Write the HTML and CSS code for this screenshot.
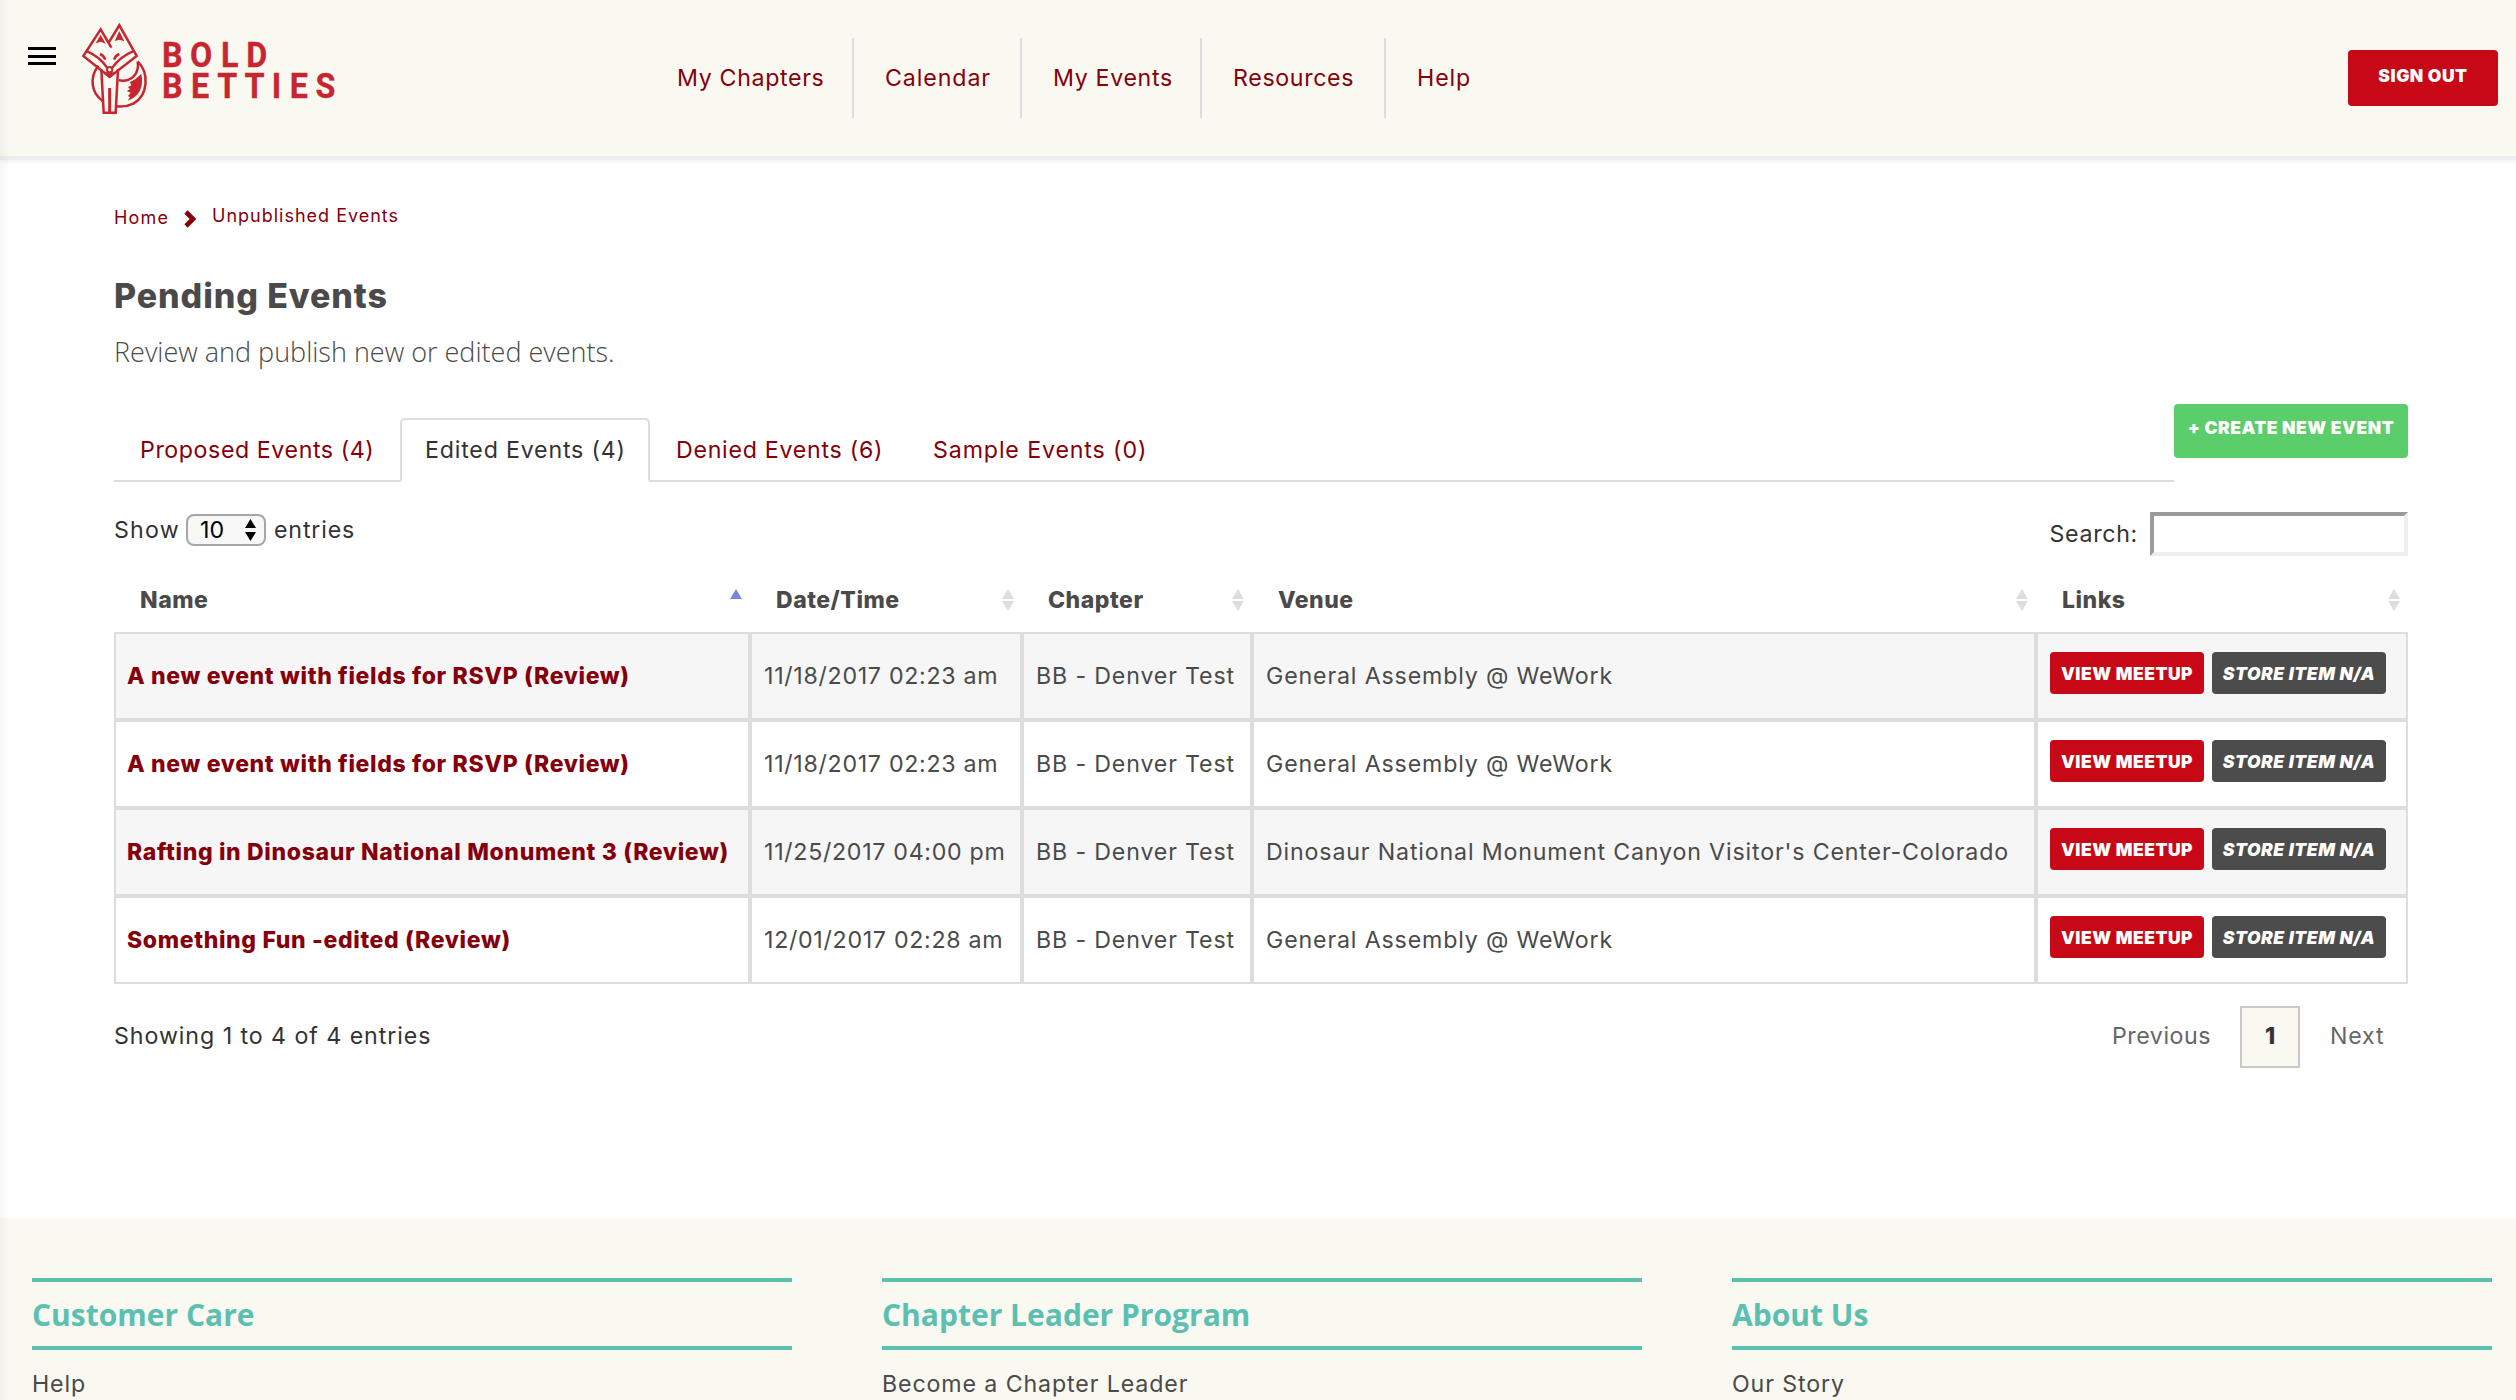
FILE: index.html
```html
<!DOCTYPE html>
<html lang="en">
<head>
<meta charset="utf-8">
<title>Pending Events - Bold Betties</title>
<link rel="stylesheet" href="styles.css">
</head>
<body>
<svg class="defs" width="0" height="0" aria-hidden="true">
  <symbol id="sort" viewBox="0 0 12 22"><path d="M6 0l6 10H0zM0 12h12L6 22z"/></symbol>
  <symbol id="sort-asc" viewBox="0 0 12 22"><path d="M6 0l6 10H0z"/></symbol>
</svg>

<header class="header">
  <div class="brand">
    <button class="menu" aria-label="Menu"><span></span><span></span><span></span></button>
    <svg class="logo" viewBox="0 0 264 94" role="img" aria-label="Bold Betties">
      <g transform="scale(.33333) translate(-240 -66)" fill="none" stroke="#c72630" stroke-width="7.5">
        <path d="M326 128L358 76L410 168L329 231L250 168L302 88L334 143"/>
        <path d="M261 154Q300 170 321 203M399 154Q360 170 337 203" stroke-width="7"/>
        <circle cx="329" cy="209" r="8" stroke-width="6"/>
        <path d="M317 218L329 233L342 218L329 220Z" fill="#c72630" stroke-width="3"/>
        <path d="M300 162Q311 166 316 179M358 162Q347 166 342 179"/>
        <path d="M302 104L287 130L302 125L317 131ZM358 93L344 123L358 119L373 124Z" fill="#c72630" stroke="none"/>
        <path d="M304 208L311 338H347L354 208"/>
        <path d="M329 264V336" stroke-width="9"/>
        <path d="M295 197C268 232 273 279 308 303"/>
        <path d="M413 184C448 218 445 286 400 311Q378 322 350 319M413 184C419 222 394 247 356 241"/>
        <path d="M424 221Q409 238 390 246L394 256L384 261L390 268L380 273L392 278L384 288L390 292L383 302Q436 282 424 221Z" fill="#c72630" stroke="none"/>
      </g>
      <g class="wordmark" transform="scale(.94 1)">
        <text x="87.2 117 150 177" y="45">BOLD</text>
        <text x="87.2 118 146 174.9 204 223.2 250.6" y="76">BETTIES</text>
      </g>
    </svg>
  </div>
  <nav class="nav">
    <a>My Chapters</a><a class="wide">Calendar</a><a>My Events</a><a>Resources</a><a class="wide">Help</a>
  </nav>
  <a class="btn btn-signout">SIGN OUT</a>
</header>

<main class="page">
  <div class="crumbs">
    <a class="crumb-home">Home</a>
    <svg class="chevron" width="12" height="18" viewBox="0 0 12 18"><path d="M2 2L9 9L2 16"/></svg>
    <a class="crumb-current">Unpublished Events</a>
  </div>
  <h1>Pending Events</h1>
  <p class="intro">Review and publish new or edited events.</p>

  <div class="tabrow">
    <nav class="tabs">
      <a class="tab">Proposed Events (4)</a><a class="tab active">Edited Events (4)</a><a class="tab denied">Denied Events (6)</a><a class="tab sample">Sample Events (0)</a>
    </nav>
    <a class="btn btn-create">+ CREATE NEW EVENT</a>
  </div>

  <div class="controls">
    <div class="length"><span class="show">Show</span>
      <span class="select">10<svg width="11" height="22" viewBox="0 0 11 22"><path d="M5.5 0l5.5 9H0zM0 13h11l-5.5 9z"/></svg></span>
      <span>entries</span></div>
    <label class="search"><span>Search:</span><input type="text"></label>
  </div>

  <table class="events">
    <colgroup><col class="c-name"><col class="c-date"><col class="c-chapter"><col class="c-venue"><col class="c-links"></colgroup>
    <thead><tr>
      <th><div><span>Name</span><svg class="sort asc"><use href="#sort-asc"/></svg></div></th>
      <th><div><span>Date/Time</span><svg class="sort"><use href="#sort"/></svg></div></th>
      <th><div><span>Chapter</span><svg class="sort"><use href="#sort"/></svg></div></th>
      <th><div><span>Venue</span><svg class="sort"><use href="#sort"/></svg></div></th>
      <th><div><span>Links</span><svg class="sort"><use href="#sort"/></svg></div></th>
    </tr></thead>
    <tbody>
      <tr><td><a>A new event with fields for RSVP (Review)</a></td><td>11/18/2017 02:23 am</td><td>BB - Denver Test</td><td>General Assembly @ WeWork</td><td><div class="links"><a class="btn btn-view">VIEW MEETUP</a><a class="btn btn-store">STORE ITEM N/A</a></div></td></tr>
      <tr><td><a>A new event with fields for RSVP (Review)</a></td><td>11/18/2017 02:23 am</td><td>BB - Denver Test</td><td>General Assembly @ WeWork</td><td><div class="links"><a class="btn btn-view">VIEW MEETUP</a><a class="btn btn-store">STORE ITEM N/A</a></div></td></tr>
      <tr><td><a>Rafting in Dinosaur National Monument 3 (Review)</a></td><td>11/25/2017 04:00 pm</td><td>BB - Denver Test</td><td>Dinosaur National Monument Canyon Visitor's Center-Colorado</td><td><div class="links"><a class="btn btn-view">VIEW MEETUP</a><a class="btn btn-store">STORE ITEM N/A</a></div></td></tr>
      <tr><td><a>Something Fun -edited (Review)</a></td><td>12/01/2017 02:28 am</td><td>BB - Denver Test</td><td>General Assembly @ WeWork</td><td><div class="links"><a class="btn btn-view">VIEW MEETUP</a><a class="btn btn-store">STORE ITEM N/A</a></div></td></tr>
    </tbody>
  </table>

  <div class="tablefoot">
    <span class="info">Showing 1 to 4 of 4 entries</span>
    <div class="pager"><a class="prev">Previous</a><a class="current">1</a><a class="next">Next</a></div>
  </div>
</main>

<footer class="footer">
  <section><h2>Customer Care</h2><a>Help</a></section>
  <section><h2>Chapter Leader Program</h2><a>Become a Chapter Leader</a></section>
  <section><h2>About Us</h2><a>Our Story</a></section>
</footer>
</body>
</html>
```
FILE: styles.css
```css
* { box-sizing: border-box; }

body {
  margin: 0;
  height: 1400px;
  overflow: hidden;
  display: flex;
  flex-direction: column;
  background: #fff;
  color: #333;
  font-family: Inter, "Liberation Sans", sans-serif;
  font-size: 23.2px;
  letter-spacing: .84px;
  white-space: nowrap;
}

/* faint shade along the left edge, cast by the closed drawer */
body::before {
  content: "";
  position: absolute;
  z-index: 2;
  left: 0;
  top: 0;
  width: 10px;
  height: 100%;
  background: linear-gradient(90deg, rgba(0, 0, 0, .035), transparent);
}

.defs { position: absolute; }

/* header */
.header {
  flex: none;
  display: flex;
  align-items: flex-start;
  height: 160px;
  padding-right: 18px;
  background: #f9f8f1;
  border-bottom: 4px solid #ededed;
  box-shadow: 0 1px 4px rgba(0, 0, 0, .07);
}
.brand { display: flex; width: 647px; padding-left: 28px; }
.menu {
  display: flex;
  flex-direction: column;
  gap: 4.5px;
  width: 28px;
  margin: 47px 24px 0 0;
  padding: 0;
  border: 0;
  background: none;
}
.menu span { height: 3px; background: #000; }
.logo { width: 264px; height: 94px; margin-top: 22px; }
.wordmark {
  fill: #c72630;
  stroke: #c72630;
  stroke-width: .3px;
  font: 700 34.4px Roboto, sans-serif;
  letter-spacing: 0;
}
.nav {
  display: grid;
  grid-template-columns: 207px 168px 180px 184px 120px;
  margin-top: 38px;
  line-height: 80px;
  color: #84000b;
  letter-spacing: .65px;
}
.nav a { padding-left: 31px; border-right: 2px solid #ddd; }
.nav a:first-child { padding-left: 30px; }
.nav a:last-child { border: 0; }
.nav .wide { letter-spacing: .9px; }

.btn {
  border-radius: 4px;
  color: #fff;
  font-size: 17.5px;
  font-weight: 900;
  letter-spacing: .52px;
  text-align: center;
}
.btn-signout {
  width: 150px;
  height: 56px;
  margin: 50px 0 0 auto;
  background: #c70817;
  line-height: 51px;
}

/* page */
.page { flex: 1; padding: 40px 108px 0 114px; }
.crumbs {
  display: flex;
  align-items: center;
  height: 34px;
  color: #84000b;
  font-size: 18px;
  letter-spacing: 1px;
}
.crumb-home { width: 70px; letter-spacing: 1.2px; }
.chevron { width: 12px; margin: 3px 16px 0 0; fill: none; stroke: #84000b; stroke-width: 4.6; }
.crumb-current { padding-bottom: 3px; }
h1 {
  margin: 42px 0 0;
  color: #4a4a4a;
  font-size: 34px;
  font-weight: 800;
  line-height: 40px;
  letter-spacing: .9px;
}
.intro {
  margin: 16px 0 0;
  color: #4a4a4a;
  font: 300 27px/39px "Open Sans", sans-serif;
  letter-spacing: 0;
}

.tabrow { display: flex; align-items: flex-end; height: 78px; margin-top: 33px; }
.tabs { flex: 1; display: flex; border-bottom: 2px solid #ddd; }
.tab {
  width: 286px;
  height: 64px;
  margin-bottom: -2px;
  padding-left: 26px;
  line-height: 64px;
  color: #84000b;
  letter-spacing: .58px;
}
.tab.active {
  width: 250px;
  padding-left: 23px;
  border: 2px solid #ddd;
  border-bottom-color: #fff;
  border-radius: 5px 5px 0 0;
  line-height: 60px;
  color: #333;
  letter-spacing: .8px;
}
.tab.denied { width: 257px; letter-spacing: .72px; }
.tab.sample { letter-spacing: .87px; }
.btn-create {
  align-self: flex-start;
  width: 234px;
  height: 54px;
  background: #5bce6b;
  line-height: 47px;
}

.controls { display: flex; justify-content: space-between; height: 86px; }
.length { display: flex; align-items: center; height: 32px; margin-top: 32px; }
.length span { line-height: 30px; padding-bottom: 1px; }
.show { width: 72px; letter-spacing: 1.2px; }
.length .select {
  display: flex;
  justify-content: space-between;
  align-items: center;
  width: 80px;
  height: 32px;
  margin-right: 8px;
  padding: 0 8px 0 12px;
  border: 2px solid #a6a6a6;
  border-radius: 8px;
  background: #f8f8f8;
  color: #000;
  letter-spacing: 0;
}
.search { display: flex; align-items: center; height: 44px; margin-top: 30px; letter-spacing: .7px; }
.search input {
  width: 258px;
  height: 44px;
  margin-left: 12px;
  border: 4px solid;
  border-color: #9a9a9a #eee #eee #9a9a9a;
  background: #fff;
}

/* table */
.events {
  width: 2294px;
  table-layout: fixed;
  border-collapse: separate;
  border-spacing: 0;
  color: #4a4a4a;
}
.c-name { width: 636px; }
.c-date { width: 272px; }
.c-chapter { width: 230px; }
.c-venue { width: 784px; }
.c-links { width: 372px; }
.events th { height: 64px; padding: 0 8px 0 26px; font-size: 23px; font-weight: 800; letter-spacing: .52px; }
.events th div { display: flex; justify-content: space-between; align-items: center; }
.sort { width: 12px; height: 22px; fill: #ddd; }
.sort.asc { fill: #7b83dd; }
.events td { height: 88px; padding: 0 0 0 12px; border: 2px solid #ddd; }
.events td:first-child { padding-left: 11px; color: #84000b; font-size: 23px; font-weight: 800; letter-spacing: .65px; }
.events td:nth-child(2) { letter-spacing: .7px; }
.events tbody tr:nth-child(odd) { background: #f6f6f6; }
.links { display: flex; gap: 8px; margin-top: -6px; }
.links .btn { height: 42px; line-height: 43px; }
.btn-view { width: 154px; background: #c70817; }
.btn-store { width: 174px; background: #4c4c4c; font-style: italic; }

.tablefoot { display: flex; justify-content: space-between; padding-top: 22px; line-height: 60px; }
.info { letter-spacing: .94px; }
.pager { display: flex; color: #666; line-height: 61px; }
.prev { width: 128px; letter-spacing: .55px; }
.current {
  width: 60px;
  height: 62px;
  border: 2px solid #c9c9c9;
  background: #f9f8f1;
  color: #333;
  font-weight: 800;
  line-height: 57px;
  letter-spacing: 0;
  text-align: center;
}
.next { width: 108px; padding-left: 30px; letter-spacing: .8px; }

/* footer */
.footer {
  flex: none;
  display: grid;
  grid-template-columns: repeat(3, 760px);
  column-gap: 90px;
  height: 182px;
  padding: 60px 0 0 32px;
  background: #f9f8f1;
  color: #4a4a4a;
  letter-spacing: .88px;
}
h2 {
  margin: 0 0 14px;
  padding-top: 1px;
  border: solid #5cc0b1;
  border-width: 4px 0;
  color: #5cc0b1;
  font: 700 30px/63px "Open Sans", sans-serif;
  letter-spacing: 0;
}
.footer a { display: block; line-height: 40px; }
```
